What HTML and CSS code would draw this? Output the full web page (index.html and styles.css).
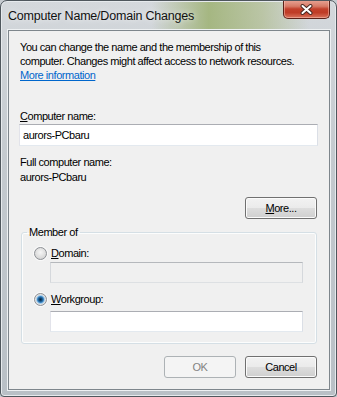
FILE: index.html
```html
<!DOCTYPE html>
<html lang="en">
<head>
  <meta charset="UTF-8" />
  <title>Computer Name/Domain Changes</title>
  <link rel="stylesheet" href="styles.css">
</head>
<body>
  <div class="window">
    <div class="titlebar">
      <span class="title">Computer Name/Domain Changes</span>
      <button class="close" aria-label="Close">
        <svg width="13" height="11" viewBox="0 0 13 11">
          <path d="M2.5 2 L10.5 9 M10.5 2 L2.5 9" stroke="#4a2a24" stroke-width="4" stroke-linecap="round" />
          <path d="M2.5 2 L10.5 9 M10.5 2 L2.5 9" stroke="#ffffff" stroke-width="2" stroke-linecap="round" />
        </svg>
      </button>
    </div>

    <div class="client">
      <p class="intro">
        You can change the name and the membership of this<br>
        computer. Changes might affect access to network resources.<br>
        <a href="#">More information</a>
      </p>

      <label class="field-label" for="compName"><u>C</u>omputer name:</label>
      <input class="textbox" id="compName" value="aurors-PCbaru" />

      <div class="full-label">Full computer name:</div>
      <div class="full-value">aurors-PCbaru</div>

      <div class="button-row more-row">
        <button class="btn"><u>M</u>ore...</button>
      </div>

      <fieldset class="group">
        <legend>Member of</legend>
        <label class="radio-row domain-row">
          <input type="radio" name="member" class="radio" />
          <span><u>D</u>omain:</span>
        </label>
        <input class="textbox indented" disabled />
        <label class="radio-row workgroup-row">
          <input type="radio" name="member" class="radio" checked />
          <span><u>W</u>orkgroup:</span>
        </label>
        <input class="textbox indented wg-box" />
      </fieldset>

      <div class="button-row footer">
        <button class="btn" disabled>OK</button>
        <button class="btn">Cancel</button>
      </div>
    </div>
  </div>
</body>
</html>
```

FILE: styles.css
```css
html, body {
  margin: 0;
  padding: 0;
  background: #c6cbd0;
}

body {
  font-family: "Liberation Sans", Arial, sans-serif;
  font-size: 11px;
  letter-spacing: -0.45px;
  color: #000;
}

.window {
  width: 337px;
  height: 397px;
  box-sizing: border-box;
  display: flex;
  flex-direction: column;
  border: 1px solid #4f575d;
  border-radius: 7px 7px 4px 4px;
  background:
    linear-gradient(to right, rgba(200,205,210,0) 0%, rgba(160,180,120,0) 45%, rgba(150,172,100,0.75) 62%, rgba(170,185,130,0.6) 78%, rgba(190,196,190,0) 92%) top / 100% 60px no-repeat,
    linear-gradient(#d4d8dc, #c4cacf 40%, #b9c0c6);
  box-shadow: inset 0 0 0 1px #e6eaed;
  overflow: hidden;
}

.titlebar {
  height: 29px;
  display: flex;
  justify-content: space-between;
  align-items: flex-start;
  flex-shrink: 0;
}

.title {
  margin: 8px 0 0 7px;
  font-size: 12.5px;
  letter-spacing: -0.2px;
  color: #111;
  text-shadow: 0 0 6px rgba(255,255,255,0.9);
}

.close {
  width: 47px;
  height: 19px;
  margin: -1px 6px 0 0;
  padding: 0;
  border: 1px solid #5c2118;
  border-top: none;
  border-radius: 0 0 5px 5px;
  background: linear-gradient(#e9a697 0%, #d77a66 35%, #c2402b 50%, #bf3c26 70%, #d9735c 100%);
  box-shadow: inset 0 0 0 1px rgba(255,210,200,0.45);
  display: flex;
  align-items: center;
  justify-content: center;
}

.client {
  flex: 1;
  margin: 0 6px 6px 7px;
  box-sizing: border-box;
  border: 1px solid #7e868c;
  box-shadow: 0 0 0 1px #eef1f3;
  background: #f0f0f0;
  padding: 9px 11px 0 10px;
  display: flex;
  flex-direction: column;
}

.intro {
  margin: 0 0 0 1px;
  line-height: 14px;
}

.intro a {
  color: #0066cc;
}

.field-label {
  margin: 27px 0 0 1px;
  line-height: 14px;
}

.textbox {
  box-sizing: border-box;
  width: 100%;
  height: 22px;
  margin: 1px 0 0;
  padding: 0 3px;
  border: 1px solid;
  border-color: #abadb3 #dbdfe6 #e3e9ef #e2e3ea;
  background: #fff;
  font-family: inherit;
  font-size: 11px;
  letter-spacing: -0.45px;
  color: #000;
  outline: none;
}

.textbox:disabled {
  background: #f0f0f0;
  border-color: #b5b8bc #d5d8dc #dde0e3 #d5d8dc;
}

.full-label {
  margin: 9px 0 0 1px;
  line-height: 14px;
}

.full-value {
  margin: 1px 0 0 1px;
  line-height: 14px;
}

.button-row {
  display: flex;
  justify-content: flex-end;
  gap: 9px;
  padding-right: 1px;
}

.more-row {
  margin-top: 13px;
}

.btn {
  width: 72px;
  height: 22px;
  padding: 0;
  border: 1px solid #707070;
  border-radius: 3px;
  background: linear-gradient(#f2f2f2 0%, #ebebeb 48%, #dddddd 52%, #cfcfcf 100%);
  box-shadow: inset 0 0 0 1px #fbfbfb;
  font-family: inherit;
  font-size: 11px;
  letter-spacing: -0.45px;
  color: #000;
}

.btn:disabled {
  border-color: #adb2b5;
  background: #f4f4f4;
  box-shadow: none;
  color: #838383;
}

.group {
  margin: 6px 1px 0 2px;
  padding: 0 13px 11px 12px;
  border: 1px solid #d5dfe5;
  border-radius: 3px;
  box-shadow: inset 0 0 0 1px #fcfdfd;
  display: flex;
  flex-direction: column;
}

.group legend {
  margin-left: -7px;
  padding: 0 2px;
  line-height: 14px;
}

.radio-row {
  display: flex;
  align-items: center;
  gap: 4px;
  line-height: 14px;
}

.domain-row {
  margin-top: 7px;
}

.workgroup-row {
  margin-top: 9px;
}

.radio {
  appearance: none;
  -webkit-appearance: none;
  width: 13px;
  height: 13px;
  margin: 0;
  border: 1px solid #8e9196;
  border-radius: 50%;
  box-sizing: border-box;
  background: radial-gradient(circle at 50% 40%, #f6f6f6 0, #dcdcdc 60%, #c8c8c8 100%);
  box-shadow: 0 0 0 1px rgba(255,255,255,0.7);
}

.radio:checked {
  background: radial-gradient(circle, #0b2740 0, #124a78 1.5px, #3a86c4 3px, #a9cdea 4px, #e4e4e4 5px, #d0d0d0 100%);
}

.indented {
  width: auto;
  margin: 2px 0 0 16px;
  height: 21px;
}

.wg-box {
  margin-top: 5px;
}

.footer {
  margin-top: 12px;
}
```
